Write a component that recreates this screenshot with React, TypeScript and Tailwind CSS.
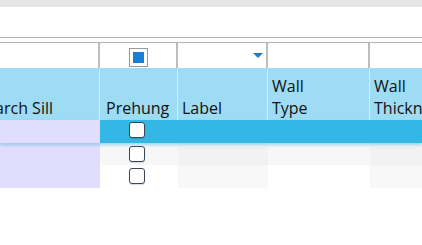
import React from "react";

const Cb = () => (
  <div className="w-[16px] h-[16px] rounded-[3px] border-[1.5px] border-[#3a4753] bg-white shadow-[0_1px_1px_rgba(0,0,0,0.15)]" />
);

export default function App() {
  return (
    <div className="w-[422px] h-[245px] bg-white overflow-hidden font-['Open_Sans',sans-serif] text-[16px] text-[#111]">
      <div className="h-[7px] bg-[#e6e6e6]" />
      <div className="h-[30px]" />
      <div className="h-px bg-[#b4b4b4]" />
      <div className="h-[4px]" />
      <div className="h-px bg-[#b4b4b4]" />
      {/* filter row */}
      <div className="grid grid-cols-[100px_78px_90px_102px_1fr] h-[25px]">
        <div className="border-r-2 border-[#bdbdbd]" />
        <div className="border-r-2 border-[#bdbdbd] pl-[29px] pt-[5px]">
          <div className="w-[19px] h-[19px] border border-[#9a9a9a] bg-white flex items-center justify-center">
            <div className="w-[11px] h-[11px] bg-[#1a7fd4]" />
          </div>
        </div>
        <div className="border-r-2 border-[#bdbdbd] flex justify-end pr-[3px] pt-[10px]">
          <svg width="10" height="5" viewBox="0 0 10 5">
            <polygon points="0,0 10,0 5,5" fill="#1a7fd4" />
          </svg>
        </div>
        <div className="border-r-2 border-[#bdbdbd]" />
        <div />
      </div>
      {/* header row */}
      <div className="grid grid-cols-[100px_78px_90px_102px_1fr] h-[52px] bg-[#9ddcf3] leading-[22px]">
        <div className="border-r border-[#cdeefa] flex justify-end items-end overflow-hidden pr-[46px] pb-[1px] whitespace-nowrap">
          <span className="shrink-0">Search Sill</span>
        </div>
        <div className="border-r border-[#cdeefa] flex items-end pl-[6px] pb-[1px] whitespace-nowrap overflow-hidden">
          Prehung
        </div>
        <div className="border-r border-[#cdeefa] flex items-end pl-[4px] pb-[1px]">Label</div>
        <div className="border-r border-[#cdeefa] flex items-end pl-[4px] pb-[1px]">
          <span>
            Wall
            <br />
            Type
          </span>
        </div>
        <div className="flex items-end pl-[4px] pb-[1px] whitespace-nowrap overflow-hidden">
          <span>
            Wall
            <br />
            Thickness
          </span>
        </div>
      </div>
      {/* selected row */}
      <div className="relative z-10 grid grid-cols-[100px_78px_90px_102px_1fr] h-[23px] shadow-[0_2px_3px_rgba(60,170,225,0.45)]">
        <div className="bg-[#e0ddfd]" />
        <div className="bg-[#33b7e5] pl-[29px] pt-[2px]">
          <Cb />
        </div>
        <div className="bg-[#33b7e5]" />
        <div className="bg-[#33b7e5]" />
        <div className="bg-[#33b7e5]" />
      </div>
      <div className="grid grid-cols-[100px_78px_90px_102px_1fr] h-[22px]">
        <div className="bg-[#e0ddfd]" />
        <div className="bg-[#f7f7f7] pl-[29px] pt-[3px]">
          <Cb />
        </div>
        <div className="bg-[#f2f2f2]" />
        <div className="bg-[#f7f7f7]" />
        <div className="bg-[#f2f2f2]" />
      </div>
      <div className="grid grid-cols-[100px_78px_90px_102px_1fr] h-[23px]">
        <div className="bg-[#e0ddfd]" />
        <div className="bg-white pl-[29px] pt-[3px]">
          <Cb />
        </div>
        <div className="bg-[#f8f8f8]" />
        <div className="bg-white" />
        <div className="bg-[#f8f8f8]" />
      </div>
    </div>
  );
}
